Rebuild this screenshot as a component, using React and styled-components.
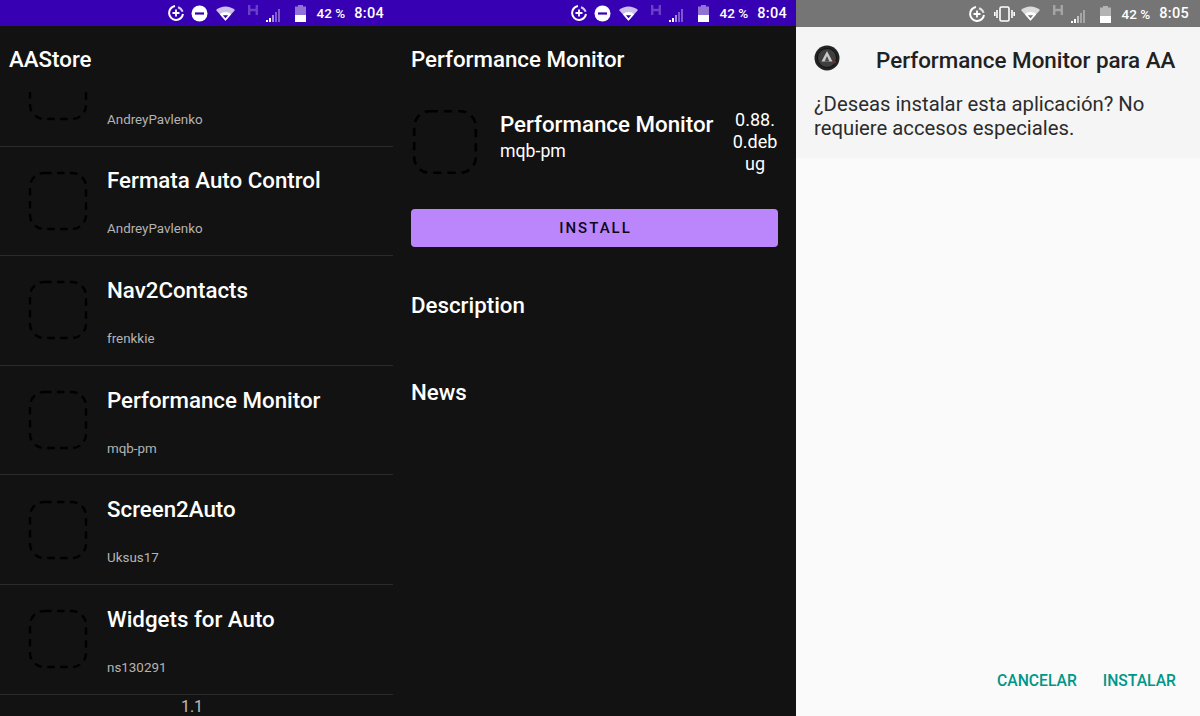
import styled, { createGlobalStyle } from "styled-components";

const GlobalStyle = createGlobalStyle`
  html, body {
    margin: 0;
    padding: 0;
    background: #121212;
    font-family: Roboto, "Liberation Sans", sans-serif;
  }
  * { box-sizing: border-box; }
`;

const Page = styled.div`
  display: grid;
  grid-template-columns: 393px 403px 404px;
  width: 1200px;
  height: 716px;
  overflow: hidden;
`;

const Screen = styled.div`
  display: flex;
  flex-direction: column;
  height: 716px;
  min-width: 0;
  background: ${(p) => (p.$light ? "#fafafa" : "#121212")};
`;

const Status = styled.div`
  flex: none;
  display: flex;
  align-items: center;
  justify-content: flex-end;
  height: ${(p) => (p.$light ? "27px" : "26px")};
  padding-right: ${(p) => p.$right}px;
  background: ${(p) => (p.$light ? "#757575" : "#3700b3")};
  color: #fff;
`;

const StatusIcon = styled.svg`
  flex: none;
  margin-left: ${(p) => p.$gap || 0}px;
  margin-top: ${(p) => p.$down || 0}px;
  margin-bottom: ${(p) => p.$up || 0}px;
`;

const Clock = styled.span`
  font-size: 14.5px;
  font-weight: 500;
  letter-spacing: 0.3px;
  margin-left: 9px;
`;

const Percent = styled.span`
  font-size: 13.5px;
  font-weight: 500;
  margin-left: 11px;
`;

const AppBar = styled.div`
  flex: none;
  display: flex;
  align-items: center;
  height: 66px;
  padding-left: ${(p) => p.$left}px;
  color: #fff;
  font-size: 22.3px;
  font-weight: 500;
`;

const List = styled.div`
  flex: 1;
  min-height: 0;
  overflow: hidden;
`;

const Rows = styled.div`
  margin-top: -55px;
`;

const Row = styled.div`
  display: flex;
  align-items: center;
  height: 109.6px;
  padding-left: 28px;
  border-bottom: 1px solid #2b2b2b;
`;

const RowText = styled.div`
  display: flex;
  flex-direction: column;
  margin-left: 19px;
  padding-top: 2px;
  gap: 27px;
`;

const RowTitle = styled.div`
  color: #fff;
  font-size: 22.3px;
  font-weight: 500;
  line-height: 28px;
`;

const RowAuthor = styled.div`
  color: #b4b4b4;
  font-size: 13.4px;
  line-height: 16px;
`;

const Version = styled.div`
  margin-top: 2px;
  padding-right: 9px;
  text-align: center;
  color: #bdbdbd;
  font-size: 16px;
  line-height: 20px;
`;

const Detail = styled.div`
  display: flex;
  flex-direction: column;
  padding: 0 18px;
`;

const AppHead = styled.div`
  display: flex;
  align-items: flex-start;
  padding: 17px 0 0 1px;
`;

const AppInfo = styled.div`
  flex: 1;
  min-width: 0;
  margin-left: 22px;
  color: #fff;
`;

const AppName = styled.div`
  font-size: 22.3px;
  font-weight: 500;
  line-height: 28px;
  margin-top: 1px;
  white-space: nowrap;
`;

const AppAuthor = styled.div`
  font-size: 17.7px;
  line-height: 24px;
  margin-top: 1px;
`;

const AppVersion = styled.div`
  width: 46px;
  margin-top: 0;
  color: #fff;
  font-size: 18px;
  line-height: 22px;
  text-align: center;
  word-break: break-all;
`;

const InstallButton = styled.button`
  display: block;
  width: 100%;
  height: 38px;
  margin-top: 34px;
  border: 0;
  border-radius: 4px;
  background: #bb86fc;
  color: #0e0618;
  font-family: inherit;
  font-size: 15px;
  font-weight: 500;
  letter-spacing: 2px;
  text-indent: 2px;
`;

const Section = styled.h2`
  margin: ${(p) => p.$top}px 0 0;
  color: #fff;
  font-size: 22.3px;
  font-weight: 500;
  line-height: 28px;
`;

const Dialog = styled.div`
  flex: none;
  height: 131px;
  padding: 0 18px;
  background: #f5f5f5;
`;

const DialogTitle = styled.div`
  display: flex;
  align-items: center;
  height: 65px;
`;

const LogoMark = styled.svg`
  flex: none;
  margin-bottom: 3px;
`;

const DialogName = styled.div`
  margin-left: 36px;
  color: #212121;
  font-size: 22.4px;
  font-weight: 500;
  white-space: nowrap;
`;

const DialogText = styled.div`
  color: #2c2c2c;
  font-size: 20.3px;
  line-height: 24px;
`;

const Spacer = styled.div`
  flex: 1;
`;

const Actions = styled.div`
  display: flex;
  justify-content: flex-end;
  gap: 26px;
  padding: 0 24px 25px 0;
`;

const Action = styled.span`
  color: #009688;
  font-size: 15.7px;
  font-weight: 500;
  line-height: 20px;
`;

const DashedIcon = styled.svg`
  flex: none;
`;

const Dashed = ({ size = 60 }) => (
  <DashedIcon width={size} height={size} viewBox="0 0 60 60" fill="none">
    <rect x="2" y="2" width="56" height="56" rx="14" stroke="#000" strokeWidth="2.4" strokeDasharray="7.500 5.500" />
  </DashedIcon>
);

const Saver = () => (
  <StatusIcon width="18" height="18" viewBox="0 0 18 18" fill="none" stroke="#fff" strokeWidth="2">
    <path d="M8 2a7 7 0 1 0 8 8" />
    <path d="M11 3.200a7 7 0 0 1 4.600 4.600" strokeOpacity=".8" />
    <path d="M9 5.500v7M5.500 9h7" strokeWidth="1.800" />
  </StatusIcon>
);

const Dnd = () => (
  <StatusIcon $gap={6} width="17" height="17" viewBox="0 0 17 17">
    <circle cx="8.500" cy="8.500" r="8" fill="#fff" />
    <rect x="4" y="7.400" width="9" height="2.200" fill="#3700b3" />
  </StatusIcon>
);

const Vibrate = () => (
  <StatusIcon $gap={8} width="21" height="16" viewBox="0 0 21 16" fill="none" stroke="#fff" strokeWidth="1.600">
    <rect x="6" y="1" width="9" height="14" rx="1.500" />
    <path d="M3 4v8M18 4v8M.8 6v4M20.200 6v4" />
  </StatusIcon>
);

const Wifi = ({ bg, gap }) => (
  <StatusIcon $gap={gap} width="19" height="15" viewBox="0 0 20 15">
    <path d="M0 3.800C5.500-1.200 14.500-1.200 20 3.800L10 15z" fill="#fff" fillOpacity=".75" />
    <path d="M4 8.300C7.500 5.200 12.500 5.200 16 8.300L10 15z" fill="#fff" />
    <path d="M7.300 9.300h5.400L10 12.400z" fill={bg} />
  </StatusIcon>
);

const Network = ({ color }) => (
  <>
    <StatusIcon $gap={13} $up={7} width="10" height="10" viewBox="0 0 10 10">
      <path d="M1.200 0v10M8.800 0v10M1.200 5h7.600" stroke={color} strokeWidth="2.400" fill="none" />
    </StatusIcon>
    <StatusIcon $gap={8} $down={5} width="14" height="13" viewBox="0 0 14 13">
      <path d="M0 13h2v-2H0z" fill="#fff" />
      <path d="M3 13h2V9H3z" fill="#fff" />
      <path d="M6 13h2V6H6z" fill="#fff" fillOpacity=".55" />
      <path d="M9 13h2V3H9zM12 13h2V0h-2z" fill="#fff" fillOpacity=".35" />
    </StatusIcon>
  </>
);

const Battery = () => (
  <StatusIcon $gap={15} $down={1} width="11" height="17" viewBox="0 0 11 17">
    <path d="M3 0h5v1.500h3V17H0V1.500h3z" fill="#fff" fillOpacity=".45" />
    <path d="M0 10h11v7H0z" fill="#fff" />
  </StatusIcon>
);

const Logo = () => (
  <LogoMark width="26" height="26" viewBox="0 0 26 26">
    <circle cx="13" cy="13" r="12.500" fill="#232323" />
    <circle cx="13" cy="13" r="9.500" fill="#3f3f3f" stroke="#111" strokeWidth="1" />
    <path d="M13 6l5.500 10.500h-11z" fill="#c9c9c9" />
    <path d="M13 11l2.400 5.500h-4.800z" fill="#4a4a4a" />
    <circle cx="20.500" cy="17" r="1.500" fill="#7a2b2b" />
  </LogoMark>
);

const apps = [
  ["", "AndreyPavlenko"],
  ["Fermata Auto Control", "AndreyPavlenko"],
  ["Nav2Contacts", "frenkkie"],
  ["Performance Monitor", "mqb-pm"],
  ["Screen2Auto", "Uksus17"],
  ["Widgets for Auto", "ns130291"],
];

const DarkStatus = ({ right, time }) => (
  <Status $right={right}>
    <Saver />
    <Dnd />
    <Wifi bg="#3700b3" gap={8} />
    <Network color="#6a3fc8" />
    <Battery />
    <Percent>42 %</Percent>
    <Clock>{time}</Clock>
  </Status>
);

export default function App() {
  return (
    <>
      <GlobalStyle />
      <Page>
        <Screen>
          <DarkStatus right={9} time="8:04" />
          <AppBar $left={9}>AAStore</AppBar>
          <List>
            <Rows>
              {apps.map(([title, author]) => (
                <Row key={author + title}>
                  <Dashed />
                  <RowText>
                    <RowTitle>{title || "\u00a0"}</RowTitle>
                    <RowAuthor>{author}</RowAuthor>
                  </RowText>
                </Row>
              ))}
              <Version>1.1</Version>
            </Rows>
          </List>
        </Screen>

        <Screen>
          <DarkStatus right={9} time="8:04" />
          <AppBar $left={18}>Performance Monitor</AppBar>
          <Detail>
            <AppHead>
              <Dashed size={66} />
              <AppInfo>
                <AppName>Performance Monitor</AppName>
                <AppAuthor>mqb-pm</AppAuthor>
              </AppInfo>
              <AppVersion>0.88.0.debug</AppVersion>
            </AppHead>
            <InstallButton>INSTALL</InstallButton>
            <Section $top={44}>Description</Section>
            <Section $top={59}>News</Section>
          </Detail>
        </Screen>

        <Screen $light>
          <Status $light $right={11}>
            <Saver />
            <Vibrate />
            <Wifi bg="#757575" gap={6} />
            <Network color="#a5a5a5" />
            <Battery />
            <Percent>42 %</Percent>
            <Clock>8:05</Clock>
          </Status>
          <Dialog>
            <DialogTitle>
              <Logo />
              <DialogName>Performance Monitor para AA</DialogName>
            </DialogTitle>
            <DialogText>¿Deseas instalar esta aplicación? No requiere accesos especiales.</DialogText>
          </Dialog>
          <Spacer />
          <Actions>
            <Action>CANCELAR</Action>
            <Action>INSTALAR</Action>
          </Actions>
        </Screen>
      </Page>
    </>
  );
}
